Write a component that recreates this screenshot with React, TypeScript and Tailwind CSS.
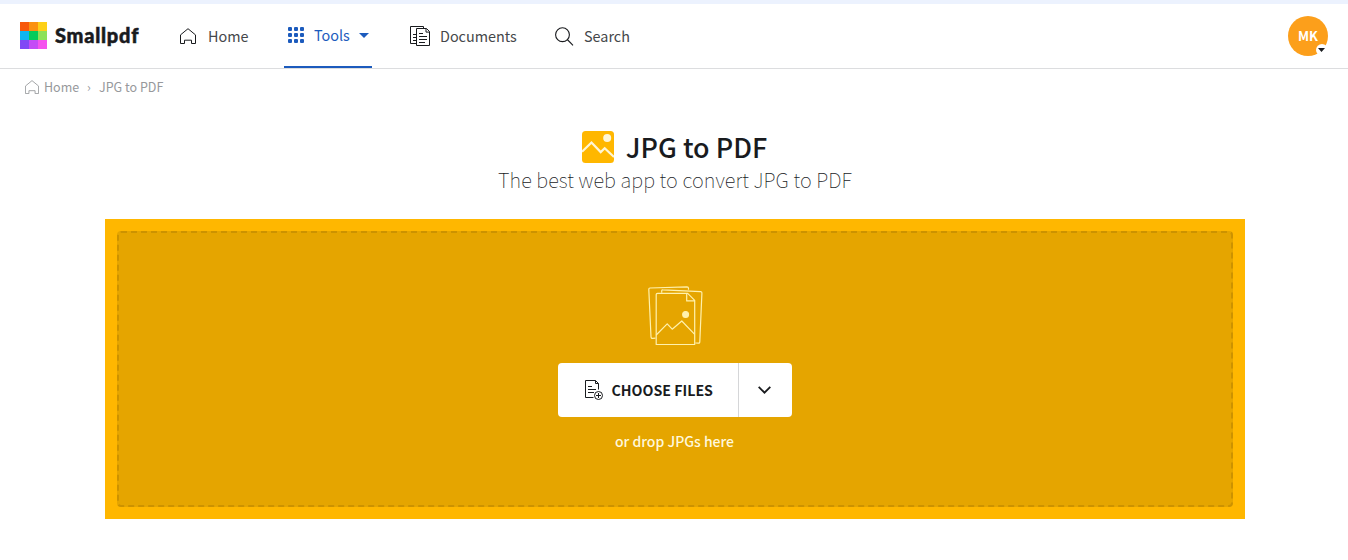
import type { ReactNode } from 'react';

const LOGO_COLORS = [
  '#f7590b', '#fb9110', '#fdd017',
  '#0fb5f2', '#05cb5b', '#8de158',
  '#8148f5', '#c44bf6', '#f553ee',
];

function Logo() {
  return (
    <a href="#" className="flex h-full w-[160px] items-center pb-[3px]">
      <svg className="mt-0.5 h-[27px] w-[27px]" viewBox="0 0 27 27" shapeRendering="crispEdges">
        {LOGO_COLORS.map((color, i) => (
          <rect key={color} x={(i % 3) * 9} y={Math.floor(i / 3) * 9} width="9" height="9" fill={color} />
        ))}
      </svg>
      <span className="ml-2 font-['Lato'] text-[20px] leading-6 font-black tracking-[0.75px] text-[#191b1e] [-webkit-text-stroke:0.5px_#191b1e]">
        Smallpdf
      </span>
    </a>
  );
}

function HomeIcon({ className }: { className?: string }) {
  return (
    <svg className={className} viewBox="0 0 16 16" fill="none" stroke="currentColor">
      <path d="M.5 6.9 8 .7l7.5 6.2v8.6h-4v-3.3h-7v3.3h-4z" strokeLinejoin="round" />
    </svg>
  );
}

function GridIcon() {
  return (
    <svg className="h-4 w-4" viewBox="0 0 16 16" fill="currentColor">
      {[0, 6, 12].map((y) =>
        [0, 6, 12].map((x) => <rect key={`${x}-${y}`} x={x} y={y} width="4" height="4" rx="1.1" />),
      )}
    </svg>
  );
}

function DocumentsIcon() {
  return (
    <svg className="h-5 w-5" viewBox="0 0 20 20" fill="none" stroke="currentColor">
      <path d="M6.5 17.5h-6V.5h13v2M3 8.5h3.5M3 11.5h3.5M3 14.5h3.5" />
      <path d="M6.5 2.5h10l3 3v14h-13zM16 2.5v3.6h3.5M9 7.5h4M9 10.5h8M9 13.5h8M9 16.5h6" />
    </svg>
  );
}

function SearchIcon() {
  return (
    <svg className="h-[19px] w-[19px]" viewBox="0 0 19 19" fill="none" stroke="currentColor" strokeWidth="1.1">
      <circle cx="7.5" cy="7.7" r="6.9" />
      <path d="m12.3 12.5 5.7 5.8" />
    </svg>
  );
}

function PicturesIcon() {
  return (
    <svg className="h-[60px] w-[55px] text-[#fff1ad]" viewBox="0 0 55 60" fill="none" stroke="currentColor" strokeWidth="1.2" strokeLinejoin="round">
      <path d="M40.5 3.8V2.2Q40.4.8 39 .8L2 2Q.7 2.1.8 3.5L3 50.8q.1 1.6 1.5 1.5l3-.2" />
      <path d="M13.7 6.8V5Q13.8 3.7 15 3.8l37.6 1.9q1.4.1 1.3 1.5l-2.1 48.7q-.1 1.4-1.5 1.3l-3-.2" />
      <path d="M9.5 7.3h30.2l7 7v44.2H8.2V8.6q0-1.3 1.3-1.3M38.7 7.3v7.6h8" />
      <path d="m8.2 49 11-11.2 5 5.4 9.6-8.2 12.9 13.4" />
      <circle cx="37.6" cy="28.4" r="2.9" fill="currentColor" />
    </svg>
  );
}

function AddFileIcon() {
  return (
    <svg className="h-5 w-[19px]" viewBox="0 0 19 20" fill="none" stroke="currentColor">
      <path d="M8.5 17.5h-8V.5h10l3 3v6M10.5.5v3h3M3 6.5h4M3 9.5h8M3 12.5h6" />
      <circle cx="13.5" cy="15.5" r="4" fill="#fff" />
      <path d="M13.5 13v5M11 15.5h5" />
    </svg>
  );
}

function NavItem({ icon, label, className }: { icon: ReactNode; label: string; className: string }) {
  return (
    <a href="#" className={`flex h-full items-center text-[#45474a] ${className}`}>
      <span className="text-[#191b1e]">{icon}</span>
      <span>{label}</span>
    </a>
  );
}

function Header() {
  return (
    <header className="flex h-[65px] items-center border-b border-[#dcdddf] px-5 text-[14.4px] leading-5">
      <Logo />
      <NavItem icon={<HomeIcon className="h-4 w-4" />} label="Home" className="w-[104px] gap-3" />
      <a href="#" className="flex h-full w-[88px] items-center border-b-2 border-[#1c5bbd] px-1 text-[#1c5bbd]">
        <GridIcon />
        <span className="ml-[10px] flex-1">Tools</span>
        <svg className="mr-[-1px] h-[5px] w-[10px]" viewBox="0 0 10 5" fill="currentColor">
          <path d="M0 0h10L5 5z" />
        </svg>
      </a>
      <NavItem icon={<DocumentsIcon />} label="Documents" className="ml-[38px] w-[145px] gap-2.5" />
      <NavItem icon={<SearchIcon />} label="Search" className="gap-2.5" />
      <button type="button" className="relative ml-auto flex h-10 w-10 items-center justify-center rounded-full bg-[#fc9f1b] text-[13px] font-bold text-white">
        MK
        <span className="absolute right-0 bottom-0 flex h-3 w-3 items-center justify-center rounded-full bg-white">
          <svg className="ml-[-2px] h-1 w-[7px]" viewBox="0 0 7 4" fill="#191b1e">
            <path d="M0 0h7L3.5 4z" />
          </svg>
        </span>
      </button>
    </header>
  );
}

function Breadcrumb() {
  return (
    <nav className="flex h-[37px] items-center pb-0.5 pl-[25px] text-[12.5px] leading-5 text-[#97999c]">
      <HomeIcon className="h-[14px] w-[14px]" />
      <span className="ml-[5px] w-[43px]">Home</span>
      <span className="w-3">›</span>
      <span>JPG to PDF</span>
    </nav>
  );
}

function Title() {
  return (
    <section className="mt-[25px] flex h-[88px] flex-col items-center">
      <div className="ml-px flex h-8 items-center">
        <svg className="h-8 w-8" viewBox="0 0 32 32">
          <rect width="32" height="32" rx="3.5" fill="#ffb700" />
          <circle cx="25.2" cy="7" r="4" fill="#fff6d6" />
          <path d="m0 20.8 9.5-9.3 9.2 9.6 4-3.8L32 26" fill="none" stroke="#fff6d6" strokeWidth="2.2" />
        </svg>
        <h1 className="ml-3 text-[26.9px] leading-8 font-medium text-[#191b1e]">JPG to PDF</h1>
      </div>
      <p className="mt-[3px] ml-0.5 text-[20px] leading-7 font-thin tracking-[0.07px] text-[#191b1e]">The best web app to convert JPG to PDF</p>
    </section>
  );
}

function DropZone() {
  return (
    <section className="ml-[105px] w-[1140px] bg-[#ffb700] p-3">
      <div className="flex h-[276px] flex-col items-center rounded-[4px] border-2 border-dashed border-[#cc9200] bg-[#e5a500] pt-[53px]">
        <PicturesIcon />
        <div className="mt-[17px] flex h-[54px] w-[234px] rounded-[4px] bg-white text-[#191b1e]">
          <button type="button" className="flex w-[181px] items-center border-r border-[#d5d6d8] pl-[27px] text-[14.2px] leading-5 font-bold">
            <AddFileIcon />
            <span className="ml-[7.5px] whitespace-nowrap">CHOOSE FILES</span>
          </button>
          <button type="button" aria-label="More sources" className="flex flex-1 items-center justify-center pr-0.5">
            <svg className="h-2 w-[13px]" viewBox="0 0 13 8" fill="none" stroke="currentColor" strokeWidth="1.8">
              <path d="m.7.8 5.8 5.9L12.3.8" />
            </svg>
          </button>
        </div>
        <p className="mt-[14px] mr-px text-[14px] leading-5 font-medium text-[#fff8dc]">or drop JPGs here</p>
      </div>
    </section>
  );
}

export default function App() {
  return (
    <div className="h-[560px] w-[1348px] overflow-hidden border-t-4 border-[#ecf2fe] bg-white font-['Noto_Sans_CJK_SC','Open_Sans',sans-serif]">
      <Header />
      <Breadcrumb />
      <Title />
      <DropZone />
    </div>
  );
}
